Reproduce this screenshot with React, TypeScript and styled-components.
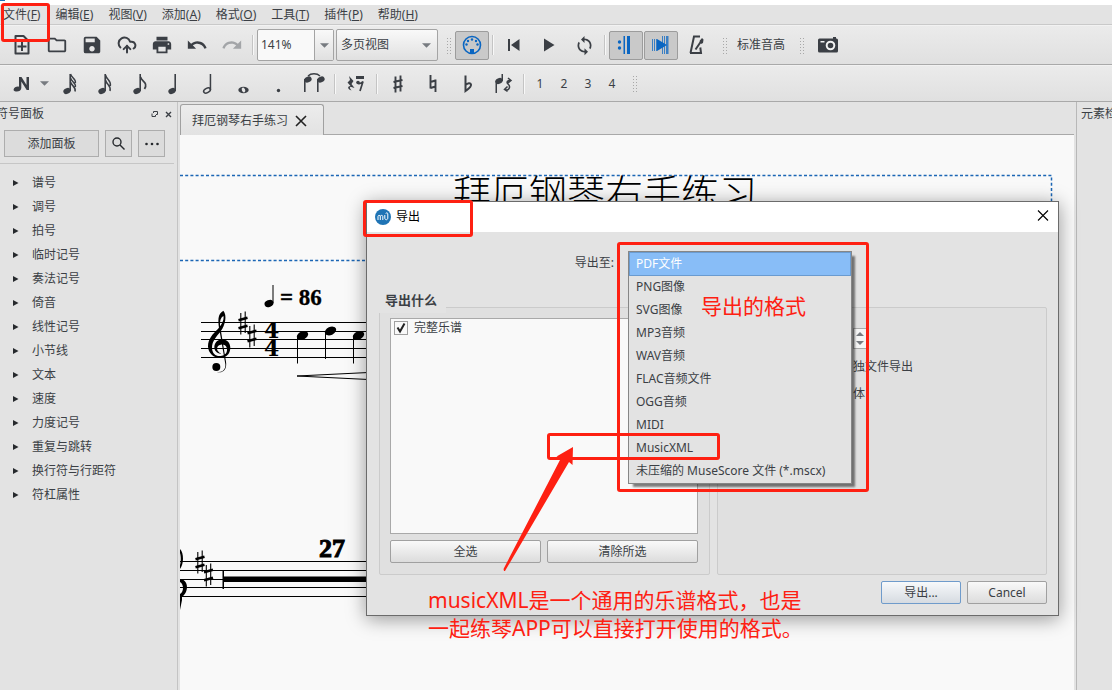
import React from "react";
import styled, { createGlobalStyle, css } from "styled-components";
import { MdSave, MdPrint, MdUndo, MdRedo, MdSync, MdOutlineFolder } from "react-icons/md";
import { CloudUpload } from "lucide-react";

const INK = "#3b3f45";
const BLUE = "#0a66c2";
const RED = "#fe2012";

const GlobalStyle = createGlobalStyle`
  * { box-sizing: border-box; }
  html, body { margin: 0; overflow: hidden; }
  body, button, input, select {
    font-family: "Noto Sans", "Noto Sans CJK SC", sans-serif;
    font-size: 12px;
    line-height: 18px;
    color: #3b3f45;
  }
  button { padding: 0; border: 0; background: none; }
  ul, h1, h2, p { margin: 0; padding: 0; list-style: none; font-weight: 400; }
`;

const Page = styled.div`
  position: relative;
  height: 100vh;
  overflow: hidden;
  display: flex;
  flex-direction: column;
  background: #e3e3e3;
`;

const TopStrip = styled.div`
  height: 5px;
  background: #fff;
  &::before { content: ""; display: block; width: 5px; height: 1px; background: #1b6fb8; }
`;

const MenuBar = styled.nav`
  display: flex;
  gap: 15px;
  height: 20px;
  padding-left: 3px;
  border-bottom: 1px solid #c9c9c9;
  white-space: nowrap;
`;

const MenuItem = styled.button`
  height: 19px;
`;

const Toolbar = styled.div<{ $height: number }>`
  display: flex;
  align-items: center;
  height: ${(p) => p.$height}px;
  padding-left: 5px;
  border-top: 1px solid #f2f2f2;
  border-bottom: 1px solid #a9a9a9;
  background: linear-gradient(#ebebeb, #e0e0e0);
`;

const Tool = styled.button<{ $on?: boolean; $w?: number }>`
  display: flex;
  flex: none;
  align-items: center;
  justify-content: center;
  width: ${(p) => p.$w ?? 34}px;
  height: 29px;
  margin-right: 1px;
  border-radius: 2px;
  color: ${INK};
  ${(p) => p.$on && css`
    border: 1px solid #9c9c9c;
    background: #c9c9c9;
    color: ${BLUE};
  `}
`;

const Separator = styled.span`
  width: 2px;
  height: 20px;
  margin: 0 3px 0 2px;
  background: linear-gradient(to right, #c4c4c4 1px, #f8f8f8 1px);
`;

const Grip = styled.span`
  width: 5px;
  height: 17px;
  margin: 0 4px 0 8px;
  background-image: radial-gradient(circle, #a8a8a8 1px, transparent 1px);
  background-size: 3px 3px;
`;

const ZoomBox = styled.div`
  display: flex;
  width: 77px;
  height: 32px;
  margin-right: 2px;
  border: 1px solid #a4a4a4;
  border-radius: 2px;
  background: #f9f9f9;
`;

const ZoomInput = styled.input`
  width: 57px;
  min-width: 0;
  padding: 0 3px;
  border: 0;
  border-right: 1px solid #a4a4a4;
  background: transparent;
`;

const ZoomArrow = styled.button`
  flex: 1;
  display: flex;
  align-items: center;
  justify-content: center;
  background: linear-gradient(#f9f9f9, #e0e0e0);
`;

const ViewField = styled.div`
  display: grid;
  width: 102px;
  height: 32px;
  align-items: center;
  border: 1px solid #a4a4a4;
  border-radius: 2px;
  background: linear-gradient(#f9f9f9, #e0e0e0);
  & > * { grid-area: 1 / 1; }
  & > svg { justify-self: end; margin-right: 6px; pointer-events: none; }
`;

const ViewSelect = styled.select`
  height: 30px;
  padding: 0 4px;
  border: 0;
  appearance: none;
  background: transparent;
`;

const PitchButton = styled.button`
  padding: 0 6px;
`;

const Voice = styled.button`
  width: 24px;
  height: 24px;
`;

const Workspace = styled.div`
  flex: 1;
  min-height: 0;
  display: flex;
`;

const SidePanel = styled.aside`
  width: 178px;
  flex: none;
  border-right: 1px solid #c4c4c4;
`;

const PanelHeader = styled.div`
  display: flex;
  align-items: center;
  gap: 5px;
  height: 24px;
  padding-right: 4px;
  overflow: hidden;
`;

const PanelTitle = styled.h2`
  flex: 1;
  margin-left: -4px;
  font-size: 12px;
`;

const HeaderButton = styled.button`
  display: flex;
  width: 9px;
  height: 9px;
  align-items: center;
  justify-content: center;
  & > svg { flex: none; }
`;

const PaletteTools = styled.div`
  display: flex;
  gap: 6px;
  margin-right: 3px;
  padding: 4px 0 6px 4px;
  border-bottom: 1px solid #c6c6c6;
`;

const PaletteButton = styled.button<{ $w: number }>`
  display: flex;
  align-items: center;
  justify-content: center;
  width: ${(p) => p.$w}px;
  height: 27px;
  border: 1px solid #adadad;
  background: #dcdcdc;
`;

const Tree = styled.ul`
  padding-top: 7px;
`;

const TreeRow = styled.li`
  display: flex;
  align-items: center;
  height: 24px;
  padding-left: 13px;
  gap: 13px;
`;

const ScoreArea = styled.main`
  flex: 1;
  min-width: 0;
  display: flex;
  flex-direction: column;
  margin: 0 2px;
`;

const TabStrip = styled.div`
  height: 33px;
  padding-top: 2px;
  border-bottom: 1px solid #a9a9a9;
`;

const Tab = styled.div`
  display: flex;
  align-items: center;
  gap: 8px;
  width: 144px;
  height: 32px;
  padding-left: 11px;
  border: 1px solid #a0a0a0;
  border-bottom: 0;
  border-radius: 3px 3px 0 0;
  background: linear-gradient(#ececec, #e2e2e2);
`;

const Canvas = styled.div`
  flex: 1;
  min-height: 0;
  overflow: hidden;
  background: #f9f9f9;
  & > svg { display: block; }
`;

const Inspector = styled.aside`
  width: 36px;
  flex: none;
  padding: 3px 0 0 4px;
  border-left: 1px solid #b8b8b8;
  overflow: hidden;
  white-space: nowrap;
`;

const Dialog = styled.section`
  position: absolute;
  left: 366px;
  top: 201px;
  width: 693px;
  border: 1px solid #6b6b6b;
  background: #e3e3e3;
  box-shadow: 0 3px 18px rgba(0, 0, 0, 0.4);
`;

const TitleBar = styled.header`
  display: flex;
  align-items: center;
  gap: 5px;
  height: 30px;
  padding: 0 9px 0 8px;
  background: #fff;
  color: #000;
`;

const DialogTitle = styled.h2`
  flex: 1;
  font-size: 12px;
`;

const DialogBody = styled.div`
  padding: 19px 11px 11px 12px;
`;

const ExportRow = styled.div`
  display: grid;
  grid-template-columns: 235px 224px;
  column-gap: 14px;
  align-items: center;
  height: 24px;
`;

const ExportLabel = styled.label`
  justify-self: end;
`;

const ComboField = styled.div`
  position: relative;
  height: 24px;
`;

const ComboButton = styled.button`
  width: 100%;
  height: 24px;
  border: 1px solid #a4a4a4;
`;

const Popup = styled.ul`
  position: absolute;
  z-index: 2;
  top: 0;
  left: 0;
  width: 224px;
  border: 1px solid #868686;
  background: #e3e3e3;
  box-shadow: 4px 4px 2px -1px rgba(0, 0, 0, 0.5);
`;

const Option = styled.li<{ $active?: boolean }>`
  height: ${(p) => (p.$active ? 24 : 23)}px;
  padding: 2px 7px;
  white-space: nowrap;
  ${(p) => p.$active && css`
    border: 1px solid #6a9bd0;
    padding: 2px 6px;
    background: #88bdf7;
    color: #fff;
  `}
`;

const Groups = styled.div`
  display: grid;
  grid-template-columns: 331px 1fr;
  gap: 7px;
  margin-top: 16px;
`;

const Group = styled.section`
  height: 284px;
`;

const GroupTitle = styled.h2`
  position: relative;
  z-index: 1;
  width: 67px;
  height: 22px;
  padding-left: 6px;
  font-weight: 700;
  font-size: 13px;
  background: #e3e3e3;
`;

const GroupFrame = styled.div<{ $titled?: boolean }>`
  height: 268px;
  margin-top: ${(p) => (p.$titled ? -6 : 16)}px;
  padding: ${(p) => (p.$titled ? "10px 11px 0 10px" : "20px 0 0 135px")};
  border: 1px solid #cbcbcb;
  border-radius: 2px;
  background: #e0e0e0;
`;

const PartList = styled.div`
  height: 216px;
  padding: 0 3px;
  border: 1px solid #a9a9a9;
  background: #f9f9f9;
`;

const CheckLabel = styled.label`
  display: flex;
  align-items: center;
  gap: 6px;
`;

const CheckBox = styled.input`
  width: 14px;
  height: 14px;
  margin: 0;
  appearance: none;
  border: 1px solid #a0a0a0;
  background: #f9f9f9;
`;

const CheckWrap = styled.span`
  display: grid;
  & > * { grid-area: 1 / 1; }
  & > svg { pointer-events: none; }
  & > input:not(:checked) + svg { display: none; }
`;

const ButtonRow = styled.div<{ $end?: boolean }>`
  display: flex;
  gap: 6px;
  justify-content: ${(p) => (p.$end ? "flex-end" : "stretch")};
  margin-top: 6px;
`;

const PushButton = styled.button<{ $w?: number; $primary?: boolean }>`
  ${(p) => (p.$w ? `width: ${p.$w}px;` : "flex: 1;")}
  height: 23px;
  border: 1px solid ${(p) => (p.$primary ? "#6f9bcb" : "#a0a0a0")};
  border-radius: 2px;
  background: ${(p) => (p.$primary ? "linear-gradient(#f7f9fb, #d6dbe1)" : "linear-gradient(#f9f9f9, #dcdcdc)")};
`;

const Spinner = styled.div`
  display: grid;
  width: 14px;
  height: 21px;
  margin-bottom: 9px;
  border: 1px solid #a9a9a9;
  background: #f5f5f5;
`;

const SpinButton = styled.button`
  display: flex;
  align-items: center;
  justify-content: center;
`;

const OptionText = styled.p`
  height: 27px;
`;

const Markup = styled.div<{ $x: number; $y: number; $w: number; $h: number }>`
  position: absolute;
  z-index: 3;
  left: ${(p) => p.$x}px;
  top: ${(p) => p.$y}px;
  width: ${(p) => p.$w}px;
  height: ${(p) => p.$h}px;
  border: 3px solid ${RED};
  border-radius: 3px;
  pointer-events: none;
`;

const MarkupText = styled.p<{ $x: number; $y: number }>`
  position: absolute;
  z-index: 3;
  left: ${(p) => p.$x}px;
  top: ${(p) => p.$y}px;
  font-size: 21px;
  line-height: 28px;
  white-space: nowrap;
  color: ${RED};
`;

const Arrow = styled.svg`
  position: absolute;
  z-index: 3;
  left: 500px;
  top: 444px;
`;

const Down = ({ w = 10 }: { w?: number }) => (
  <svg width={w} height="5" viewBox="0 0 10 5" fill="#777b80"><path d="M0 0h10L5 5z" /></svg>
);

const Glyph = ({ children, w = 28 }: { children: React.ReactNode; w?: number }) => (
  <svg width={w} height="24" viewBox={`0 0 ${w} 24`} fill={INK} stroke={INK} strokeWidth="0">{children}</svg>
);

const Head = ({ x = 11, y = 19 }: { x?: number; y?: number }) => (
  <ellipse cx={x} cy={y} rx="3.8" ry="2.8" transform={`rotate(-25 ${x} ${y})`} />
);

const Sharp = ({ x, y }: { x: number; y: number }) => (
  <g transform={`translate(${x} ${y})`} fill="none" stroke="currentColor">
    <path d="M-2.200 -10v21.500M2.200 -11.500v21.500" strokeWidth="1.100" />
    <path d="M-4.500 -2.800L4.500 -5.200M-4.500 5.200L4.500 2.800" strokeWidth="2.600" />
  </g>
);

const noteTools: [string, React.ReactNode][] = [
  ["三十二分音符", <Glyph key="32"><Head x={12} /><path d="M14.400 19V2h1.600V19z" /><path d="M15.500 2c1 4 6 5 4.800 9M15.500 6c1 4 6 5 4.800 9M15.500 10c1 4 6 5 4.500 9.500" fill="none" strokeWidth="1.500" /></Glyph>],
  ["十六分音符", <Glyph key="16"><Head x={12} /><path d="M14.400 19V2h1.600V19z" /><path d="M15.500 3c1 5 6 5 4.800 11M15.500 8c1 5 6 5 4.500 11" fill="none" strokeWidth="1.500" /></Glyph>],
  ["八分音符", <Glyph key="8"><Head x={12} /><path d="M14.400 19V2h1.600V19z" /><path d="M15.500 5c1 5 8 5 4 12" fill="none" strokeWidth="1.700" /></Glyph>],
  ["四分音符", <Glyph key="4"><Head x={12} /><path d="M14.400 19V2H16V19z" /></Glyph>],
  ["二分音符", <Glyph key="2"><ellipse cx="12" cy="18.500" rx="3.600" ry="2.200" transform="rotate(-28 12 18.500)" fill="none" strokeWidth="1.500" /><path d="M14.700 18V2h1.500V18z" /></Glyph>],
  ["全音符", <Glyph key="1"><ellipse cx="13.500" cy="18" rx="5.200" ry="3.300" /><ellipse cx="13.500" cy="18" rx="1.600" ry="2.500" transform="rotate(-25 13.500 18)" fill="#e5e5e5" /></Glyph>],
  ["附点", <Glyph key="dot"><circle cx="13.500" cy="18.500" r="1.700" /></Glyph>],
  ["连音线", <Glyph key="tie"><Head x={8} y={7.500} /><Head x={21} y={7.500} /><path d="M4 7h1.600v13H4zM17 7h1.600v13H17z" /><path d="M8 4c3-3 9-3 12 0" fill="none" strokeWidth="1.300" /></Glyph>],
];

const palettes = ["谱号", "调号", "拍号", "临时记号", "奏法记号", "倚音", "线性记号", "小节线", "文本", "速度", "力度记号", "重复与跳转", "换行符与行距符", "符杠属性"];
const menus = [["文件", "F"], ["编辑", "E"], ["视图", "V"], ["添加", "A"], ["格式", "O"], ["工具", "T"], ["插件", "P"], ["帮助", "H"]];
const formats = ["PDF文件", "PNG图像", "SVG图像", "MP3音频", "WAV音频", "FLAC音频文件", "OGG音频", "MIDI", "MusicXML", "未压缩的 MuseScore 文件 (*.mscx)"];

const Score = () => (
  <svg width="893" height="555" viewBox="180 135 893 555" color="#000" fill="#000">
    <g fill="none" stroke="#1b66b5" strokeWidth="1.500" strokeDasharray="3 2.200">
      <path d="M180 175.500H1051.500V262" />
      <path d="M180 260.500H1051.500" />
    </g>
    <text x="453" y="207" fontFamily='"Noto Sans CJK SC", sans-serif' fontWeight="200" fontSize="38">拜厄钢琴右手练习</text>
    <g stroke="#000" strokeWidth="1">
      {[322.5, 331.5, 339.5, 348.5, 357.5].map((y) => <path key={y} d={`M201 ${y}H700`} />)}
      {[561.5, 570.5, 579.5, 587.5, 596.5].map((y) => <path key={y} d={`M180 ${y}H700`} />)}
    </g>
    <g transform="translate(170 270) scale(0.3333)">
      <circle cx="139" cy="291" r="12" />
      <path d="M139 305C160 310 170 295 165 277L150 190C142 150 143 132 160 122C172 136 166 165 152 184C140 200 126 213 126 234C127 251 137 259 151 258C166 257 172 248 171 237C169 225 161 223 153 224C142 225 139 235 143 242C146 247 151 249 154 252C138 249 133 241 133 231C134 217 144 208 158 208C173 209 181 221 181 234C180 253 168 264 150 264C129 264 115 249 114 229C114 208 128 192 143 178C155 165 162 152 161 139C153 140 147 154 152 178L168 275C172 298 158 312 139 305Z" />
    </g>
    <Sharp x={243} y={323} />
    <Sharp x={252} y={336} />
    <g fontFamily='"DejaVu Serif", serif' fontWeight="700">
      <text x="264" y="338" fontSize="22">4</text>
      <text x="264" y="356" fontSize="22">4</text>
    </g>
    <g fontFamily='"Liberation Serif", serif' fontWeight="700" stroke="#000">
      <text x="280" y="305" fontSize="23" strokeWidth="0.300">= 86</text>
      <text x="319" y="557" fontSize="26" strokeWidth="1">27</text>
    </g>
    <ellipse cx="269" cy="303.500" rx="4.600" ry="3.400" transform="rotate(-22 269 303.500)" />
    <path d="M272.500 285h1v18h-1z" />
    {[[302.5, 335.5], [330.5, 331], [358.5, 335.5]].map(([x, y]) => (
      <g key={x}>
        <ellipse cx={x} cy={y} rx="6" ry="4" transform={`rotate(-25 ${x} ${y})`} />
        <path d={`M${x - 5.5} ${y}h1v28h-1z`} />
      </g>
    ))}
    <path d="M440 369L297 376L440 383" fill="none" stroke="#000" strokeWidth="1" />
    <path d="M180 549C184 553 184 564 180 569V565C181 562 181 556 180 553ZM180 579C189 580 189 592 182 597V600L180 610V594C184 592 184 584 180 582Z" />
    <Sharp x={200} y={562} />
    <Sharp x={208.5} y={575} />
    <path d="M222.500 570h1.500v19h-1.500zM224 576.500h300v5.500H224z" />
  </svg>
);

export default function App() {
  return (
    <Page>
      <GlobalStyle />
      <TopStrip />
      <MenuBar>
        {menus.map(([name, key]) => <MenuItem key={key}>{name}(<u>{key}</u>)</MenuItem>)}
      </MenuBar>

      <Toolbar $height={40}>
        <Tool aria-label="新建">
          <Glyph><path d="M7.500 3h8l5 5v12.500h-13z" fill="none" strokeWidth="2" strokeLinejoin="round" /><path d="M14 9v9M9.500 13.500h9" strokeWidth="2" /></Glyph>
        </Tool>
        <Tool aria-label="打开"><MdOutlineFolder size={22} /></Tool>
        <Tool aria-label="保存"><MdSave size={22} /></Tool>
        <Tool aria-label="上传"><CloudUpload size={20} strokeWidth={2.4} /></Tool>
        <Tool aria-label="打印"><MdPrint size={22} /></Tool>
        <Tool aria-label="撤销"><MdUndo size={22} /></Tool>
        <Tool aria-label="重做"><MdRedo size={22} color="#a3a5a8" /></Tool>
        <Separator />
        <ZoomBox>
          <ZoomInput aria-label="缩放" defaultValue="141%" />
          <ZoomArrow aria-label="缩放列表"><Down w={9} /></ZoomArrow>
        </ZoomBox>
        <ViewField>
          <ViewSelect aria-label="视图模式"><option>多页视图</option></ViewSelect>
          <Down w={9} />
        </ViewField>
        <Grip />
        <Tool $on aria-label="MIDI输入">
          <svg width="20" height="20" viewBox="0 0 20 20" fill={BLUE}>
            <circle cx="10" cy="10" r="8.500" fill="none" stroke={BLUE} strokeWidth="1.600" />
            <circle cx="4.500" cy="9.500" r="1.200" /><circle cx="6" cy="6" r="1.200" /><circle cx="10" cy="4.500" r="1.200" /><circle cx="14" cy="6" r="1.200" /><circle cx="15.500" cy="9.500" r="1.200" />
            <path d="M8 14h4v4H8z" />
          </svg>
        </Tool>
        <Separator />
        <Tool aria-label="回到开头"><Glyph><path d="M8 6h2v12H8zM19.500 6v12L11 12z" /></Glyph></Tool>
        <Tool aria-label="播放"><Glyph><path d="M9 5.500v13L19.500 12z" /></Glyph></Tool>
        <Tool aria-label="循环"><MdSync size={21} /></Tool>
        <Separator />
        <Tool $on aria-label="播放反复">
          <svg width="20" height="20" viewBox="0 0 20 20" fill={BLUE}><circle cx="3.500" cy="7" r="1.700" /><circle cx="3.500" cy="13" r="1.700" /><path d="M7.500 1H9v18H7.500zM11 1h3v18h-3z" /></svg>
        </Tool>
        <Tool $on aria-label="跟随播放">
          <svg width="20" height="20" viewBox="0 0 20 20" fill={BLUE}>
            <path d="M1 4h1v12H1zM3 4h1v12H3zM5 4h1v12H5zM11 1h1v18h-1zM13 1h1v18h-1zM15 1h2.500v18H15z" opacity="0.75" />
            <path d="M6 4l10 6-10 6z" />
          </svg>
        </Tool>
        <Tool aria-label="节拍器">
          <Glyph><path d="M8.500 20L12 3.500h6M8 20h11l-.7-5.500M13.500 16.500L20 7" fill="none" strokeWidth="2" /><path d="M17.500 8l2.500-3 1.500 1.500-.5 3.500-2 1z" /></Glyph>
        </Tool>
        <Grip />
        <PitchButton>标准音高</PitchButton>
        <Grip />
        <Tool $w={40} aria-label="截图">
          <svg width="20" height="16" viewBox="0 0 20 16" fill={INK}>
            <path d="M1.500 1.500H15V0h3v1.500h.5A1.500 1.500 0 0 1 20 3v11a1.500 1.500 0 0 1-1.500 1.500h-17A1.500 1.500 0 0 1 0 14V3a1.500 1.500 0 0 1 1.500-1.500z" />
            <circle cx="12.500" cy="8.500" r="3.800" fill="none" stroke="#f2f2f2" strokeWidth="2" />
            <path d="M2.500 4h4v1.500h-4z" fill="#f2f2f2" />
          </svg>
        </Tool>
      </Toolbar>

      <Toolbar $height={37}>
        <Tool $w={31} aria-label="音符输入">
          <Glyph><path d="M12 5h2.500l5 8V5H22v13h-2.300L14.300 9.500V16c0 4-6.500 4.500-7.800 2c.5-3 3.500-3.800 5.500-3.300z" /></Glyph>
        </Tool>
        <Tool $w={14} aria-label="输入模式"><Down w={9} /></Tool>
        {noteTools.map(([name, icon]) => <Tool key={name} aria-label={name}>{icon}</Tool>)}
        <Separator />
        <Tool aria-label="休止符">
          <Glyph><path d="M7 4l4.500 5-2 3 3 4-4-1.200c-1.500 1 .3 2.500 1 3.700C6 17.500 4.500 14.500 8.500 14L5.500 10.500 8 8z" /><path d="M14 4h8v3h-8z" /><circle cx="16" cy="10.500" r="1.800" /><path d="M16 11.500c3 .5 4-.5 5-2L18 19" fill="none" strokeWidth="1.700" /></Glyph>
        </Tool>
        <Separator />
        <Tool aria-label="升号"><Glyph><path d="M11.500 4.500v16M16.500 3.500v16M9.500 10l9-2M9.500 16l9-2" strokeWidth="1.900" /></Glyph></Tool>
        <Tool aria-label="还原号"><Glyph><path d="M11.500 3v13.500M16.500 7.500V20M11.500 10l5-1.500M11.500 16l5-1.500" strokeWidth="1.900" /></Glyph></Tool>
        <Tool aria-label="降号"><Glyph><path d="M11.500 3.500V19c3.500-2.500 6-4 5.500-6.500-.5-2-3.500-1.500-5.500.5" fill="none" strokeWidth="2" /></Glyph></Tool>
        <Tool aria-label="翻转方向"><Glyph><Head x={10} y={9} /><path d="M6.500 9H8v12H6.500zM12.500 2H14v7h-1.500z" /><path d="M16 17.500c4 2 6-3 3-5.500c-2-2 0-4 2.500-3.500M19 6l3 2.500-3 2.500M18.500 14.500l-3 3 3 2" fill="none" strokeWidth="1.500" /></Glyph></Tool>
        <Separator />
        {[1, 2, 3, 4].map((n) => <Voice key={n}>{n}</Voice>)}
        <Grip />
      </Toolbar>

      <Workspace>
        <SidePanel>
          <PanelHeader>
            <PanelTitle>符号面板</PanelTitle>
            <HeaderButton aria-label="浮动"><svg width="8" height="8" viewBox="0 0 8 8" fill="none" stroke={INK}><path d="M2.500 3v-1.500h4v3H5M1 3.500v3h3.500V5" /></svg></HeaderButton>
            <HeaderButton aria-label="关闭"><svg width="7" height="7" viewBox="0 0 7 7" stroke={INK} strokeWidth="1.400"><path d="M1 1l5 5M6 1L1 6" /></svg></HeaderButton>
          </PanelHeader>
          <PaletteTools>
            <PaletteButton $w={95}>添加面板</PaletteButton>
            <PaletteButton $w={27} aria-label="搜索"><svg width="13" height="13" viewBox="0 0 13 13" fill="none" stroke="#26292d" strokeWidth="1.400"><circle cx="5" cy="5" r="4" /><path d="M8 8l4.500 4.500" /></svg></PaletteButton>
            <PaletteButton $w={27} aria-label="更多"><svg width="14" height="4" viewBox="0 0 14 4" fill="#26292d"><circle cx="1.500" cy="2" r="1.300" /><circle cx="7" cy="2" r="1.300" /><circle cx="12.500" cy="2" r="1.300" /></svg></PaletteButton>
          </PaletteTools>
          <Tree>
            {palettes.map((p) => (
              <TreeRow key={p}><svg width="6" height="6" viewBox="0 0 6 6" fill="#26292d"><path d="M0 0l5.500 3L0 6z" /></svg>{p}</TreeRow>
            ))}
          </Tree>
        </SidePanel>
        <ScoreArea>
          <TabStrip>
            <Tab>
              拜厄钢琴右手练习
              <HeaderButton aria-label="关闭标签"><svg width="12" height="12" viewBox="0 0 12 12" stroke="#222" strokeWidth="1.600"><path d="M1 1l10 10M11 1L1 11" /></svg></HeaderButton>
            </Tab>
          </TabStrip>
          <Canvas><Score /></Canvas>
        </ScoreArea>
        <Inspector>元素检查器</Inspector>
      </Workspace>

      <Dialog role="dialog" aria-label="导出">
        <TitleBar>
          <svg width="16" height="16" viewBox="0 0 16 16" fill="none" stroke="#fff"><circle cx="8" cy="8" r="8" fill="#1f74b5" stroke="none" /><path d="M3 11V7.500c0-1.500 2.300-1.500 2.300 0V11M5.300 7.500c0-1.500 2.500-1.500 2.500 0V11M9.800 6v3c0 2.300 3 2.300 3 0V5c0-1.500-2-1.500-2-.2" /></svg>
          <DialogTitle>导出</DialogTitle>
          <button aria-label="关闭"><svg width="12" height="11" viewBox="0 0 12 11" stroke="#000" strokeWidth="1.100"><path d="M1 .5l10 10M11 .5L1 10.500" /></svg></button>
        </TitleBar>
        <DialogBody>
          <ExportRow>
            <ExportLabel htmlFor="format">导出至:</ExportLabel>
            <ComboField>
              <ComboButton id="format" aria-haspopup="listbox" aria-expanded="true" />
              <Popup role="listbox">
                {formats.map((f, i) => <Option key={f} role="option" aria-selected={i === 0} $active={i === 0}>{f}</Option>)}
              </Popup>
            </ComboField>
          </ExportRow>
          <Groups>
            <Group>
              <GroupTitle>导出什么</GroupTitle>
              <GroupFrame $titled>
                <PartList>
                  <CheckLabel>
                    <CheckWrap>
                      <CheckBox type="checkbox" defaultChecked />
                      <svg width="14" height="14" viewBox="0 0 14 14" fill="none" stroke="#222" strokeWidth="2"><path d="M3.500 6.500l2.500 4 4.500-8" /></svg>
                    </CheckWrap>
                    完整乐谱
                  </CheckLabel>
                </PartList>
                <ButtonRow>
                  <PushButton>全选</PushButton>
                  <PushButton>清除所选</PushButton>
                </ButtonRow>
              </GroupFrame>
            </Group>
            <Group>
              <GroupFrame>
                <Spinner>
                  <SpinButton aria-label="增加"><svg width="8" height="4" viewBox="0 0 8 4" fill="#777b80"><path d="M0 4h8L4 0z" /></svg></SpinButton>
                  <SpinButton aria-label="减少"><svg width="8" height="4" viewBox="0 0 8 4" fill="#777b80"><path d="M0 0h8L4 4z" /></svg></SpinButton>
                </Spinner>
                <OptionText>独文件导出</OptionText>
                <OptionText>体</OptionText>
              </GroupFrame>
            </Group>
          </Groups>
          <ButtonRow $end>
            <PushButton $w={80} $primary>导出...</PushButton>
            <PushButton $w={80}>Cancel</PushButton>
          </ButtonRow>
        </DialogBody>
      </Dialog>

      <Markup $x={1} $y={3} $w={49} $h={39} />
      <Markup $x={363} $y={200} $w={110} $h={37} />
      <Markup $x={617} $y={242} $w={252} $h={250} />
      <Markup $x={547} $y={433} $w={173} $h={27} />
      <Arrow width="80" height="130" viewBox="500 444 80 130" fill={RED}>
        <path d="M504 571L503.500 569L561 458L556.500 456.500L573 447L572.500 465L569 462L505 571Z" />
      </Arrow>
      <MarkupText $x={701} $y={292}>导出的格式</MarkupText>
      <MarkupText $x={428} $y={586}>musicXML是一个通用的乐谱格式，也是<br />一起练琴APP可以直接打开使用的格式。</MarkupText>
    </Page>
  );
}
